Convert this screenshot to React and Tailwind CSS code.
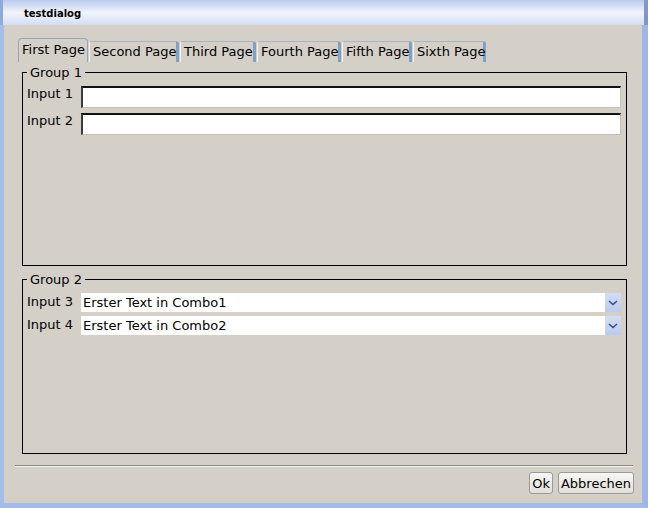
import React from "react";

const tabs = [
  { label: "First Page", w: "w-[70px]", selected: true },
  { label: "Second Page", w: "w-[90px]" },
  { label: "Third Page", w: "w-[76px]" },
  { label: "Fourth Page", w: "w-[84px]" },
  { label: "Fifth Page", w: "w-[70px]" },
  { label: "Sixth Page", w: "w-[73px]" },
];

function Tab({ label, w, selected }) {
  if (selected) {
    return (
      <div
        className={`${w} h-[24px] shrink-0 rounded-t-[4px] border-l border-t border-r border-[#94a6bd] bg-[#d4d0c8] pl-[3px] pt-[3px] leading-[15px] whitespace-nowrap`}
      >
        {label}
      </div>
    );
  }
  return (
    <div
      className={`${w} h-[21px] shrink-0 rounded-t-[3px] border-l border-l-[#f2f2f2] border-t border-t-[#a9b4c2] border-r-[3px] border-r-[#82a0c6] bg-[#d4d0c8] pl-[3px] pt-[2px] leading-[15px] whitespace-nowrap`}
    >
      {label}
    </div>
  );
}

function TextInput() {
  return (
    <div className="flex-1 h-[22px] bg-white border-t-2 border-l-2 border-t-[#111] border-l-[#3a3a3a] border-r border-b border-r-[#c4c1ba] border-b-[#c4c1ba]" />
  );
}

function Combo({ text }) {
  return (
    <div className="flex-1 h-[19px] bg-white flex items-center">
      <span className="flex-1 pl-[2px] leading-[15px] whitespace-nowrap">{text}</span>
      <div className="w-[16px] h-[19px] bg-gradient-to-b from-[#d3ddf4] to-[#bccbed] flex items-center justify-center">
        <svg width="10" height="6" viewBox="0 0 10 6">
          <path d="M1 1 L5 4.5 L9 1" fill="none" stroke="#2f4f8f" strokeWidth="1.6" />
        </svg>
      </div>
    </div>
  );
}

export default function App() {
  return (
    <div className="w-[648px] h-[508px] flex flex-col bg-[#a8bfe9] font-['DejaVu_Sans',sans-serif] text-[13px] text-black overflow-hidden">
      {/* Title bar */}
      <div className="h-[25px] shrink-0 flex items-center pl-[21px] bg-gradient-to-b from-[#b9cbee] via-[#f1f4fb] to-[#d3def4] border-l-[3px] border-l-[#8fa9dc] border-r-[4px] border-r-[#7f97c9]">
        <span className="text-[10px] font-bold leading-[12px] mt-[2px]">testdialog</span>
      </div>
      {/* Body */}
      <div className="flex-1 flex flex-col bg-[#d4d0c8] border-l-[4px] border-r-[6px] border-b-[5px] border-l-[#a5bde9] border-r-[#9fb7e6] border-b-[#a3bbe8] pt-[13px]">
        {/* Tabs */}
        <div className="h-[24px] flex items-end gap-[1px] pl-[14px]">
          {tabs.map((t) => (
            <Tab key={t.label} {...t} />
          ))}
        </div>

        {/* Group 1 */}
        <fieldset className="mt-[3px] ml-[18px] w-[605px] h-[201px] border border-black pl-[4px] pr-[5px] pt-[6px]">
          <legend className="px-[3px] leading-[15px]">Group 1</legend>
          <div className="flex flex-col gap-[5px]">
            <div className="flex items-start">
              <span className="w-[54px] leading-[15px]">Input 1</span>
              <TextInput />
            </div>
            <div className="flex items-start">
              <span className="w-[54px] leading-[15px]">Input 2</span>
              <TextInput />
            </div>
          </div>
        </fieldset>

        {/* Group 2 */}
        <fieldset className="mt-[6px] ml-[18px] w-[605px] h-[182px] border border-black pl-[4px] pr-[5px] pt-[6px]">
          <legend className="px-[3px] leading-[15px]">Group 2</legend>
          <div className="flex flex-col gap-[4px]">
            <div className="flex items-start">
              <span className="w-[54px] leading-[15px] pt-[1px]">Input 3</span>
              <Combo text="Erster Text in Combo1" />
            </div>
            <div className="flex items-start">
              <span className="w-[54px] leading-[15px] pt-[1px]">Input 4</span>
              <Combo text="Erster Text in Combo2" />
            </div>
          </div>
        </fieldset>

        {/* Separator */}
        <div className="mt-[11px] ml-[11px] w-[618px] h-[2px] border-t border-t-[#8c8a86] border-b border-b-[#f4f3f0]" />

        {/* Buttons */}
        <div className="mt-[5px] flex justify-end gap-[5px] pr-[8px]">
          <button className="h-[22px] px-[2px] rounded-[3px] border border-[#9a9a9a] bg-gradient-to-b from-[#f7f7f5] to-[#e2dfd9] leading-[15px]">
            Ok
          </button>
          <button className="h-[22px] px-[2px] rounded-[3px] border border-[#9a9a9a] bg-gradient-to-b from-[#f7f7f5] to-[#e2dfd9] leading-[15px]">
            Abbrechen
          </button>
        </div>
      </div>
    </div>
  );
}
